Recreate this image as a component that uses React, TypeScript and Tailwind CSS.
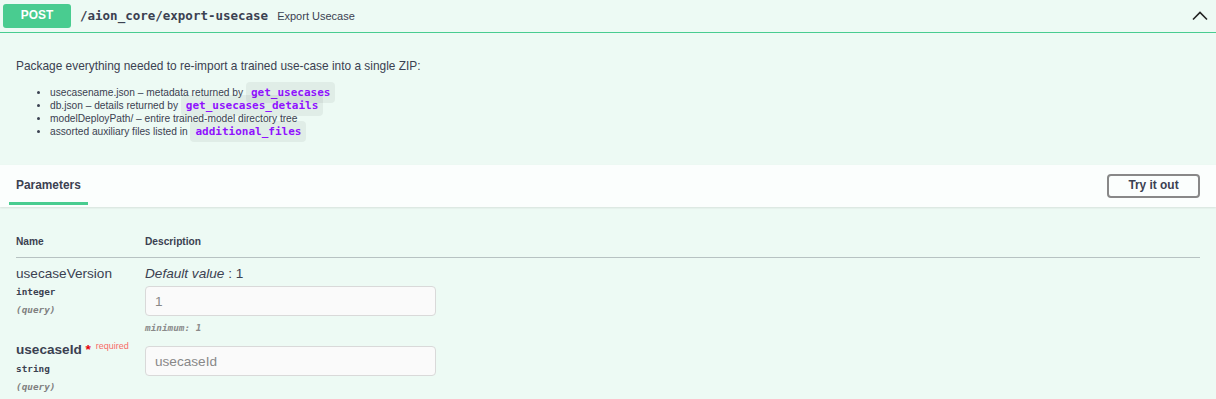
import React from "react"

const mono = "font-['DejaVu_Sans_Mono',monospace]"

const Code = ({ children }: { children: React.ReactNode }) => (
  <code className={`${mono} rounded-[4px] bg-black/5 px-[5px] py-[4px] text-[11px] leading-[10px] font-bold text-[#9012fe]`}>
    {children}
  </code>
)

export default function App() {
  return (
    <div className="h-[399px] w-[1216px] overflow-hidden bg-[#edfaf4] font-['Liberation_Sans',Arial,sans-serif] text-[#3b4151]">
      {/* summary */}
      <div className="flex h-[33px] items-center border-b border-[#49cc90] pl-[3px] pr-[8px]">
        <div className="-mt-[1px] flex h-[24px] w-[68px] items-center justify-center rounded-[3px] bg-[#49cc90] text-[11.9px] font-bold text-white">
          POST
        </div>
        <span className={`${mono} ml-[9px] text-[12.5px] font-bold`}>/aion_core/export-usecase</span>
        <span className="ml-[9px] text-[11px]">Export Usecase</span>
        <svg className="ml-auto" width="16" height="10" viewBox="0 0 16 10" fill="none">
          <polyline points="1,8.5 8,1.5 15,8.5" stroke="#222" strokeWidth="1.6" />
        </svg>
      </div>

      {/* description */}
      <div className="h-[132px] px-[16px] pt-[26px]">
        <p className="text-[11.9px] leading-[14px]">
          Package everything needed to re-import a trained use-case into a single ZIP:
        </p>
        <ul className="mt-[13px] list-disc pl-[34px] text-[10.2px] leading-[13px]">
          <li>
            usecasename.json – metadata returned by <Code>get_usecases</Code>
          </li>
          <li>
            db.json – details returned by <Code>get_usecases_details</Code>
          </li>
          <li>modelDeployPath/ – entire trained-model directory tree</li>
          <li>
            assorted auxiliary files listed in <Code>additional_files</Code>
          </li>
        </ul>
      </div>

      {/* parameters header */}
      <div className="flex h-[42px] items-center justify-between bg-white/80 pl-[9px] pr-[16px] shadow-[0_1px_2px_rgba(0,0,0,0.1)]">
        <div className="relative flex h-full items-center px-[7px]">
          <span className="text-[11.9px] font-bold">Parameters</span>
          <div className="absolute bottom-[2px] left-0 right-0 h-[3px] bg-[#49cc90]" />
        </div>
        <button className="h-[24px] w-[93px] rounded-[4px] border-2 border-[#888] bg-transparent text-[11.9px] font-bold text-[#3b4151]">
          Try it out
        </button>
      </div>

      {/* table */}
      <div className="mx-[16px] pt-[29px]">
        <div className="grid grid-cols-[129px_1fr] border-b border-[#3b4151]/30 pb-[9px] text-[10.2px] font-bold leading-[12px]">
          <div>Name</div>
          <div>Description</div>
        </div>

        <div className="grid grid-cols-[129px_1fr] pt-[8px]">
          <div>
            <div className="text-[13.6px] leading-[16px]">usecaseVersion</div>
            <div className={`${mono} mt-[4px] text-[9.35px] font-bold leading-[12px]`}>integer</div>
            <div className={`${mono} mt-[6px] text-[9.35px] italic font-bold leading-[12px] text-[#808080]`}>(query)</div>
          </div>
          <div>
            <div className="text-[13.6px] leading-[16px]">
              <i>Default value</i> : 1
            </div>
            <input
              disabled
              value="1"
              readOnly
              className="mt-[4px] block h-[30px] w-[291px] rounded-[4px] border border-[#d9d9d9] bg-[#fafafa] px-[9px] font-['Liberation_Sans',Arial,sans-serif] text-[13.6px] text-[#888]"
            />
            <div className={`${mono} mt-[6px] text-[9.35px] italic font-bold leading-[11px] text-[#8a8a8a]`}>minimum: 1</div>
          </div>
        </div>

        <div className="grid grid-cols-[129px_1fr] pt-[9px]">
          <div>
            <div className="text-[13.6px] font-bold leading-[16px]">
              usecaseId<span className="text-red-600">&nbsp;*</span>
              <span className="relative -top-[5px] pl-[5px] text-[9px] font-normal text-[#f86a67]">required</span>
            </div>
            <div className={`${mono} mt-[4px] text-[9.35px] font-bold leading-[12px]`}>string</div>
            <div className={`${mono} mt-[6px] text-[9.35px] italic font-bold leading-[12px] text-[#808080]`}>(query)</div>
          </div>
          <div>
            <input
              disabled
              placeholder="usecaseId"
              className="mt-[4px] block h-[30px] w-[291px] rounded-[4px] border border-[#d9d9d9] bg-[#fafafa] px-[9px] font-['Liberation_Sans',Arial,sans-serif] text-[13.6px] text-[#888] placeholder:text-[#888]"
            />
          </div>
        </div>
      </div>
    </div>
  )
}
